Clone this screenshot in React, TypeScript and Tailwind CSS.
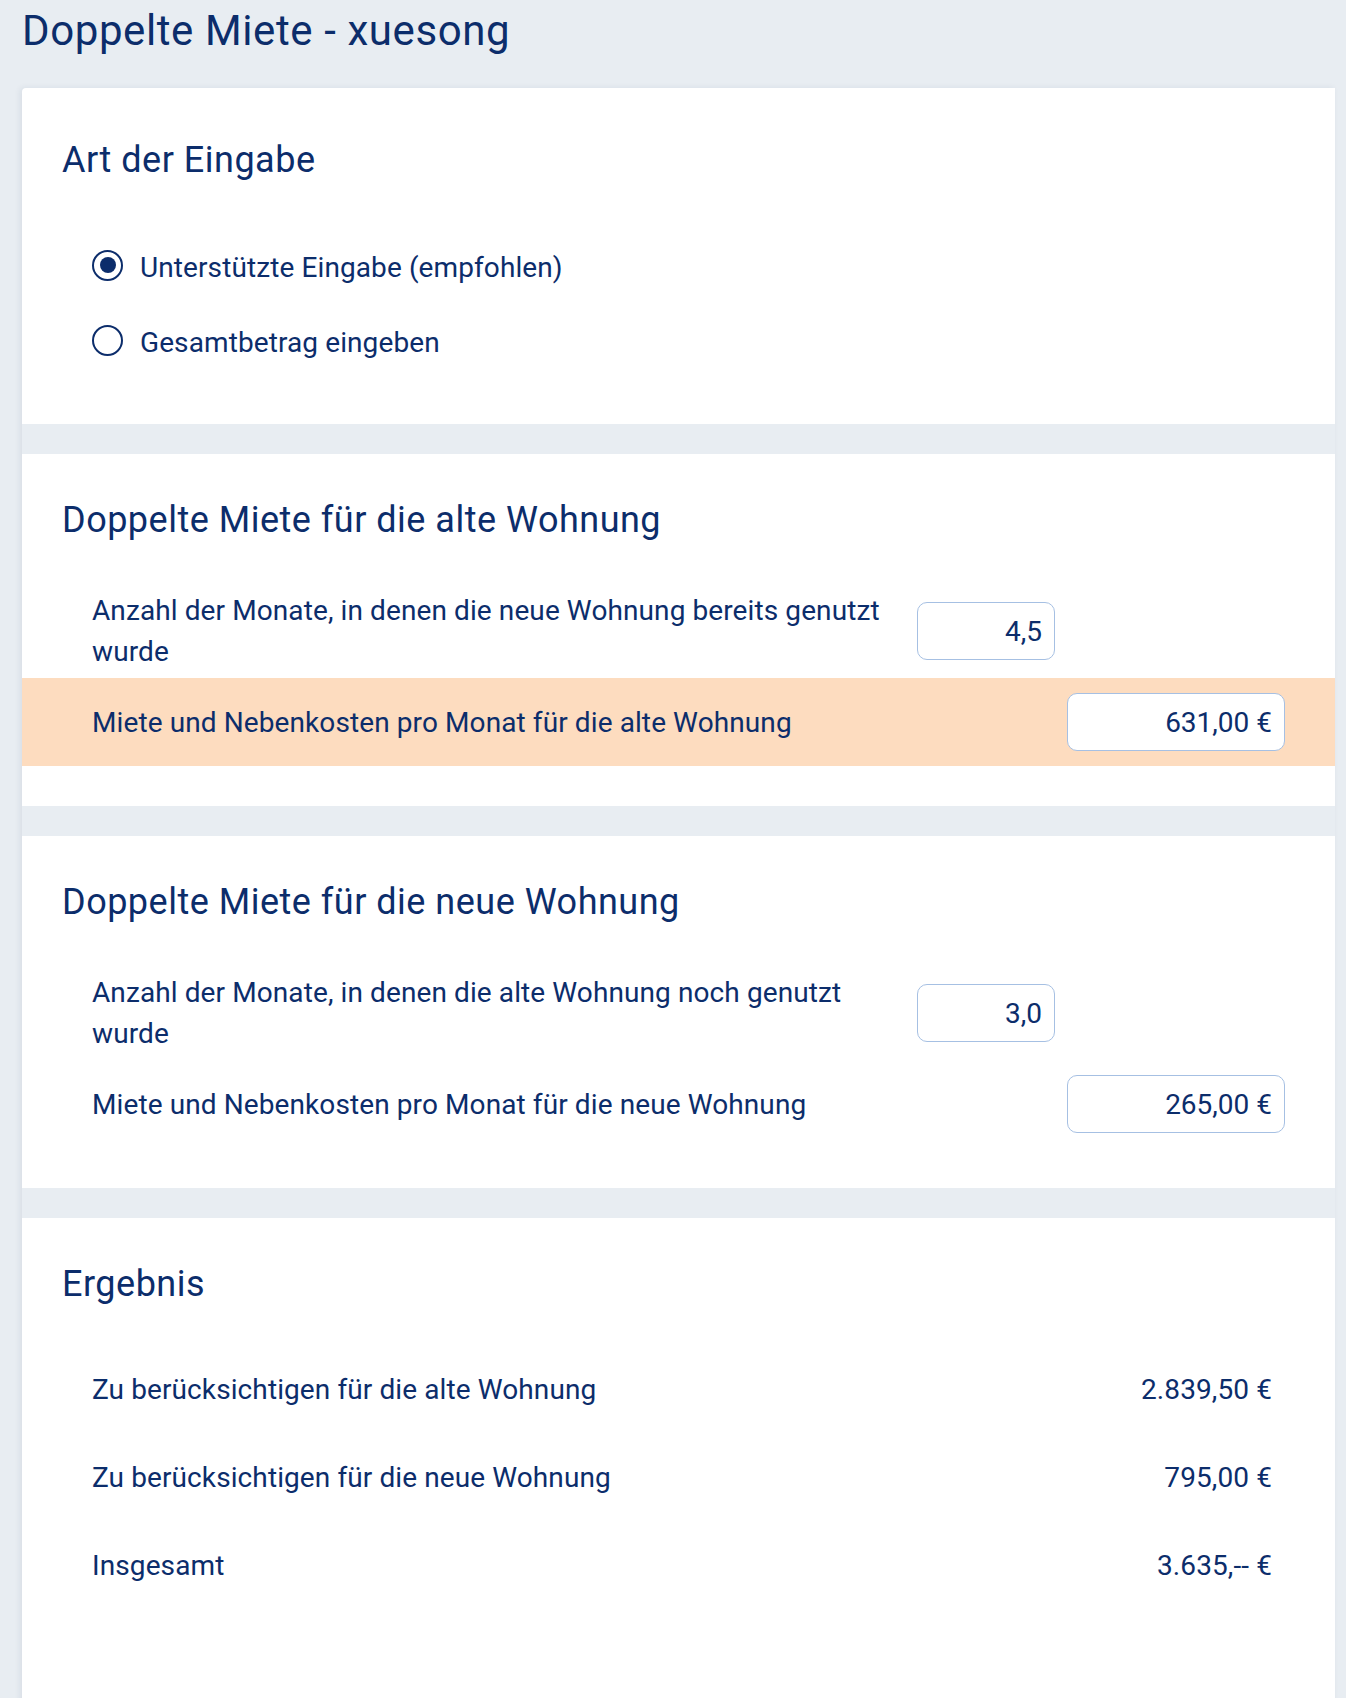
import React from "react";

const ink = "text-[#0c2d6b]";

function Band() {
  return <div className="h-[30px] bg-[#e8edf2]" />;
}

function SectionTitle({ children }: { children: React.ReactNode }) {
  return (
    <h2 className={`pl-[40px] text-[36px] leading-[40px] tracking-[0.5px] font-normal ${ink}`}>
      {children}
    </h2>
  );
}

interface FieldRowProps {
  label: string;
  value: string;
  wide?: boolean;
  highlight?: boolean;
  className?: string;
}

function FieldRow({ label, value, wide, highlight, className = "" }: FieldRowProps) {
  return (
    <div
      className={`flex items-center pl-[70px] pr-[50px] ${
        highlight ? "bg-[#fddcbf]" : ""
      } ${className}`}
    >
      <div className={`w-[803px] text-[28px] leading-[41px] tracking-[0.1px] ${ink}`}>{label}</div>
      <div className={`ml-[22px] flex w-[368px] ${wide ? "justify-end" : "justify-start"}`}>
        <input
          readOnly
          value={value}
          className={`h-[58px] ${
            wide ? "w-[218px]" : "w-[138px]"
          } rounded-[10px] border-[1.5px] border-[#a6c0e3] bg-white pr-[12px] text-right text-[28px] outline-none ${ink}`}
        />
      </div>
    </div>
  );
}

function Radio({ label, checked }: { label: string; checked?: boolean }) {
  return (
    <label className="flex h-[40px] items-center gap-[17px] pl-[70px]">
      <span className="-mt-[6px] flex h-[31px] w-[31px] items-center justify-center rounded-full border-[2px] border-[#0c2d6b]">
        {checked && <span className="h-[16px] w-[16px] rounded-full bg-[#0c2d6b]" />}
      </span>
      <span className={`text-[28px] leading-[40px] tracking-[0.1px] ${ink}`}>{label}</span>
    </label>
  );
}

function ResultRow({ label, value }: { label: string; value: string }) {
  return (
    <div
      className={`flex h-[88px] items-center justify-between pl-[70px] pr-[63px] text-[28px] leading-[41px] tracking-[0.1px] ${ink}`}
    >
      <span>{label}</span>
      <span>{value}</span>
    </div>
  );
}

export default function App() {
  return (
    <div
      className="min-h-screen bg-[#e8edf2]"
      style={{ fontFamily: "Roboto, 'Noto Sans', sans-serif" }}
    >
      <div className="h-[88px] pl-[22px] pt-[7px]">
        <h1 className={`text-[42px] leading-[48px] tracking-[0.6px] font-normal ${ink}`}>
          Doppelte Miete - xuesong
        </h1>
      </div>

      <div className="ml-[22px] mr-[11px] overflow-hidden rounded-tl-[4px] bg-white shadow-[-2px_0_6px_rgba(30,50,90,0.08)]">
        {/* Art der Eingabe */}
        <section className="h-[336px] pt-[52px]">
          <SectionTitle>Art der Eingabe</SectionTitle>
          <div className="mt-[68px] flex flex-col gap-[35px]">
            <Radio label="Unterstützte Eingabe (empfohlen)" checked />
            <Radio label="Gesamtbetrag eingeben" />
          </div>
        </section>

        <Band />

        <section className="h-[352px] pt-[46px]">
          <SectionTitle>Doppelte Miete für die alte Wohnung</SectionTitle>
          <FieldRow
            className="mt-[50px]"
            label="Anzahl der Monate, in denen die neue Wohnung bereits genutzt wurde"
            value="4,5"
          />
          <FieldRow
            className="mt-[6px] h-[88px]"
            label="Miete und Nebenkosten pro Monat für die alte Wohnung"
            value="631,00 €"
            wide
            highlight
          />
        </section>

        <Band />

        <section className="h-[352px] pt-[46px]">
          <SectionTitle>Doppelte Miete für die neue Wohnung</SectionTitle>
          <FieldRow
            className="mt-[50px]"
            label="Anzahl der Monate, in denen die alte Wohnung noch genutzt wurde"
            value="3,0"
          />
          <FieldRow
            className="mt-[6px] h-[88px]"
            label="Miete und Nebenkosten pro Monat für die neue Wohnung"
            value="265,00 €"
            wide
          />
        </section>

        <Band />

        <section className="h-[520px] pt-[46px]">
          <SectionTitle>Ergebnis</SectionTitle>
          <div className="mt-[41px]">
            <ResultRow label="Zu berücksichtigen für die alte Wohnung" value="2.839,50 €" />
            <ResultRow label="Zu berücksichtigen für die neue Wohnung" value="795,00 €" />
            <ResultRow label="Insgesamt" value="3.635,-- €" />
          </div>
        </section>
      </div>
    </div>
  );
}
